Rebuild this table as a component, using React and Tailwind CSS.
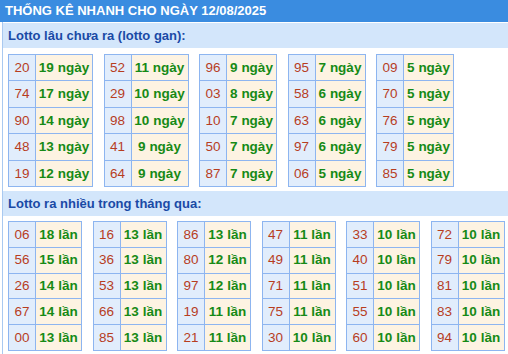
import React from 'react';

const gan = [
  { w: 'w-[85px]', rows: [['20', 19], ['74', 17], ['90', 14], ['48', 13], ['19', 12]] },
  { w: 'w-[85px]', rows: [['52', 11], ['29', 10], ['98', 10], ['41', 9], ['64', 9]] },
  { w: 'w-[78px]', rows: [['96', 9], ['03', 8], ['10', 7], ['50', 7], ['87', 7]] },
  { w: 'w-[78px]', rows: [['95', 7], ['58', 6], ['63', 6], ['97', 6], ['06', 5]] },
  { w: 'w-[78px]', rows: [['09', 5], ['70', 5], ['76', 5], ['79', 5], ['85', 5]] },
];

const nhieu = [
  [['06', 18], ['56', 15], ['26', 14], ['67', 14], ['00', 13]],
  [['16', 13], ['36', 13], ['53', 13], ['66', 13], ['85', 13]],
  [['86', 13], ['80', 12], ['97', 12], ['19', 11], ['21', 11]],
  [['47', 11], ['49', 11], ['71', 11], ['75', 11], ['30', 10]],
  [['33', 10], ['40', 10], ['51', 10], ['55', 10], ['60', 10]],
  [['72', 10], ['79', 10], ['81', 10], ['83', 10], ['94', 10]],
];

const StatTable = ({ rows, unit, rowH, width }) => (
  <table className={`${width} shrink-0 table-fixed border-collapse leading-none whitespace-nowrap`}>
    <tbody>
      {rows.map(([num, count], i) => (
        <tr key={num} className={rowH}>
          <td className={`${i === 0 ? 'w-[27px]' : ''} border border-[#8db5f0] bg-[#e1edfc] text-center text-[13.5px] text-[#b73d1f]`}>
            {num}
          </td>
          <td className="border border-[#8db5f0] bg-[#fdf3e2] text-center text-[13.5px] font-bold text-[#168a16]">
            {count} {unit}
          </td>
        </tr>
      ))}
    </tbody>
  </table>
);

const SectionTitle = ({ children }) => (
  <div className="h-[25px] bg-[#d3e6fb] pl-[5px] flex items-center text-[13px] font-bold text-[#1a4aa6]">
    {children}
  </div>
);

export default function App() {
  return (
    <div className="w-[508px] h-[354px] overflow-hidden bg-white" style={{ fontFamily: '"Liberation Sans", Arial, sans-serif' }}>
      {/* Header */}
      <div className="h-[22px] bg-[#3a8ce0] pl-[5px] flex items-center text-[13px] font-bold text-white">
        THỐNG KÊ NHANH CHO NGÀY 12/08/2025
      </div>

      <div className="ml-[2px] border-l border-[#a9c9f0] pt-[1px] h-[332px]">
        <SectionTitle>Lotto lâu chưa ra (lotto gan):</SectionTitle>
        <div className="flex gap-[10.5px] pl-[5px] pt-[6px] pb-[4px]">
          {gan.map((t, i) => (
            <StatTable key={i} rows={t.rows} width={t.w} unit="ngày" rowH="h-[26.4px]" />
          ))}
        </div>

        <SectionTitle>Lotto ra nhiều trong tháng qua:</SectionTitle>
        <div className="flex gap-[10.5px] pl-[5px] pt-[5px]">
          {nhieu.map((rows, i) => (
            <StatTable key={i} rows={rows} width="w-[74px]" unit="lần" rowH="h-[25.8px]" />
          ))}
        </div>
      </div>
    </div>
  );
}
